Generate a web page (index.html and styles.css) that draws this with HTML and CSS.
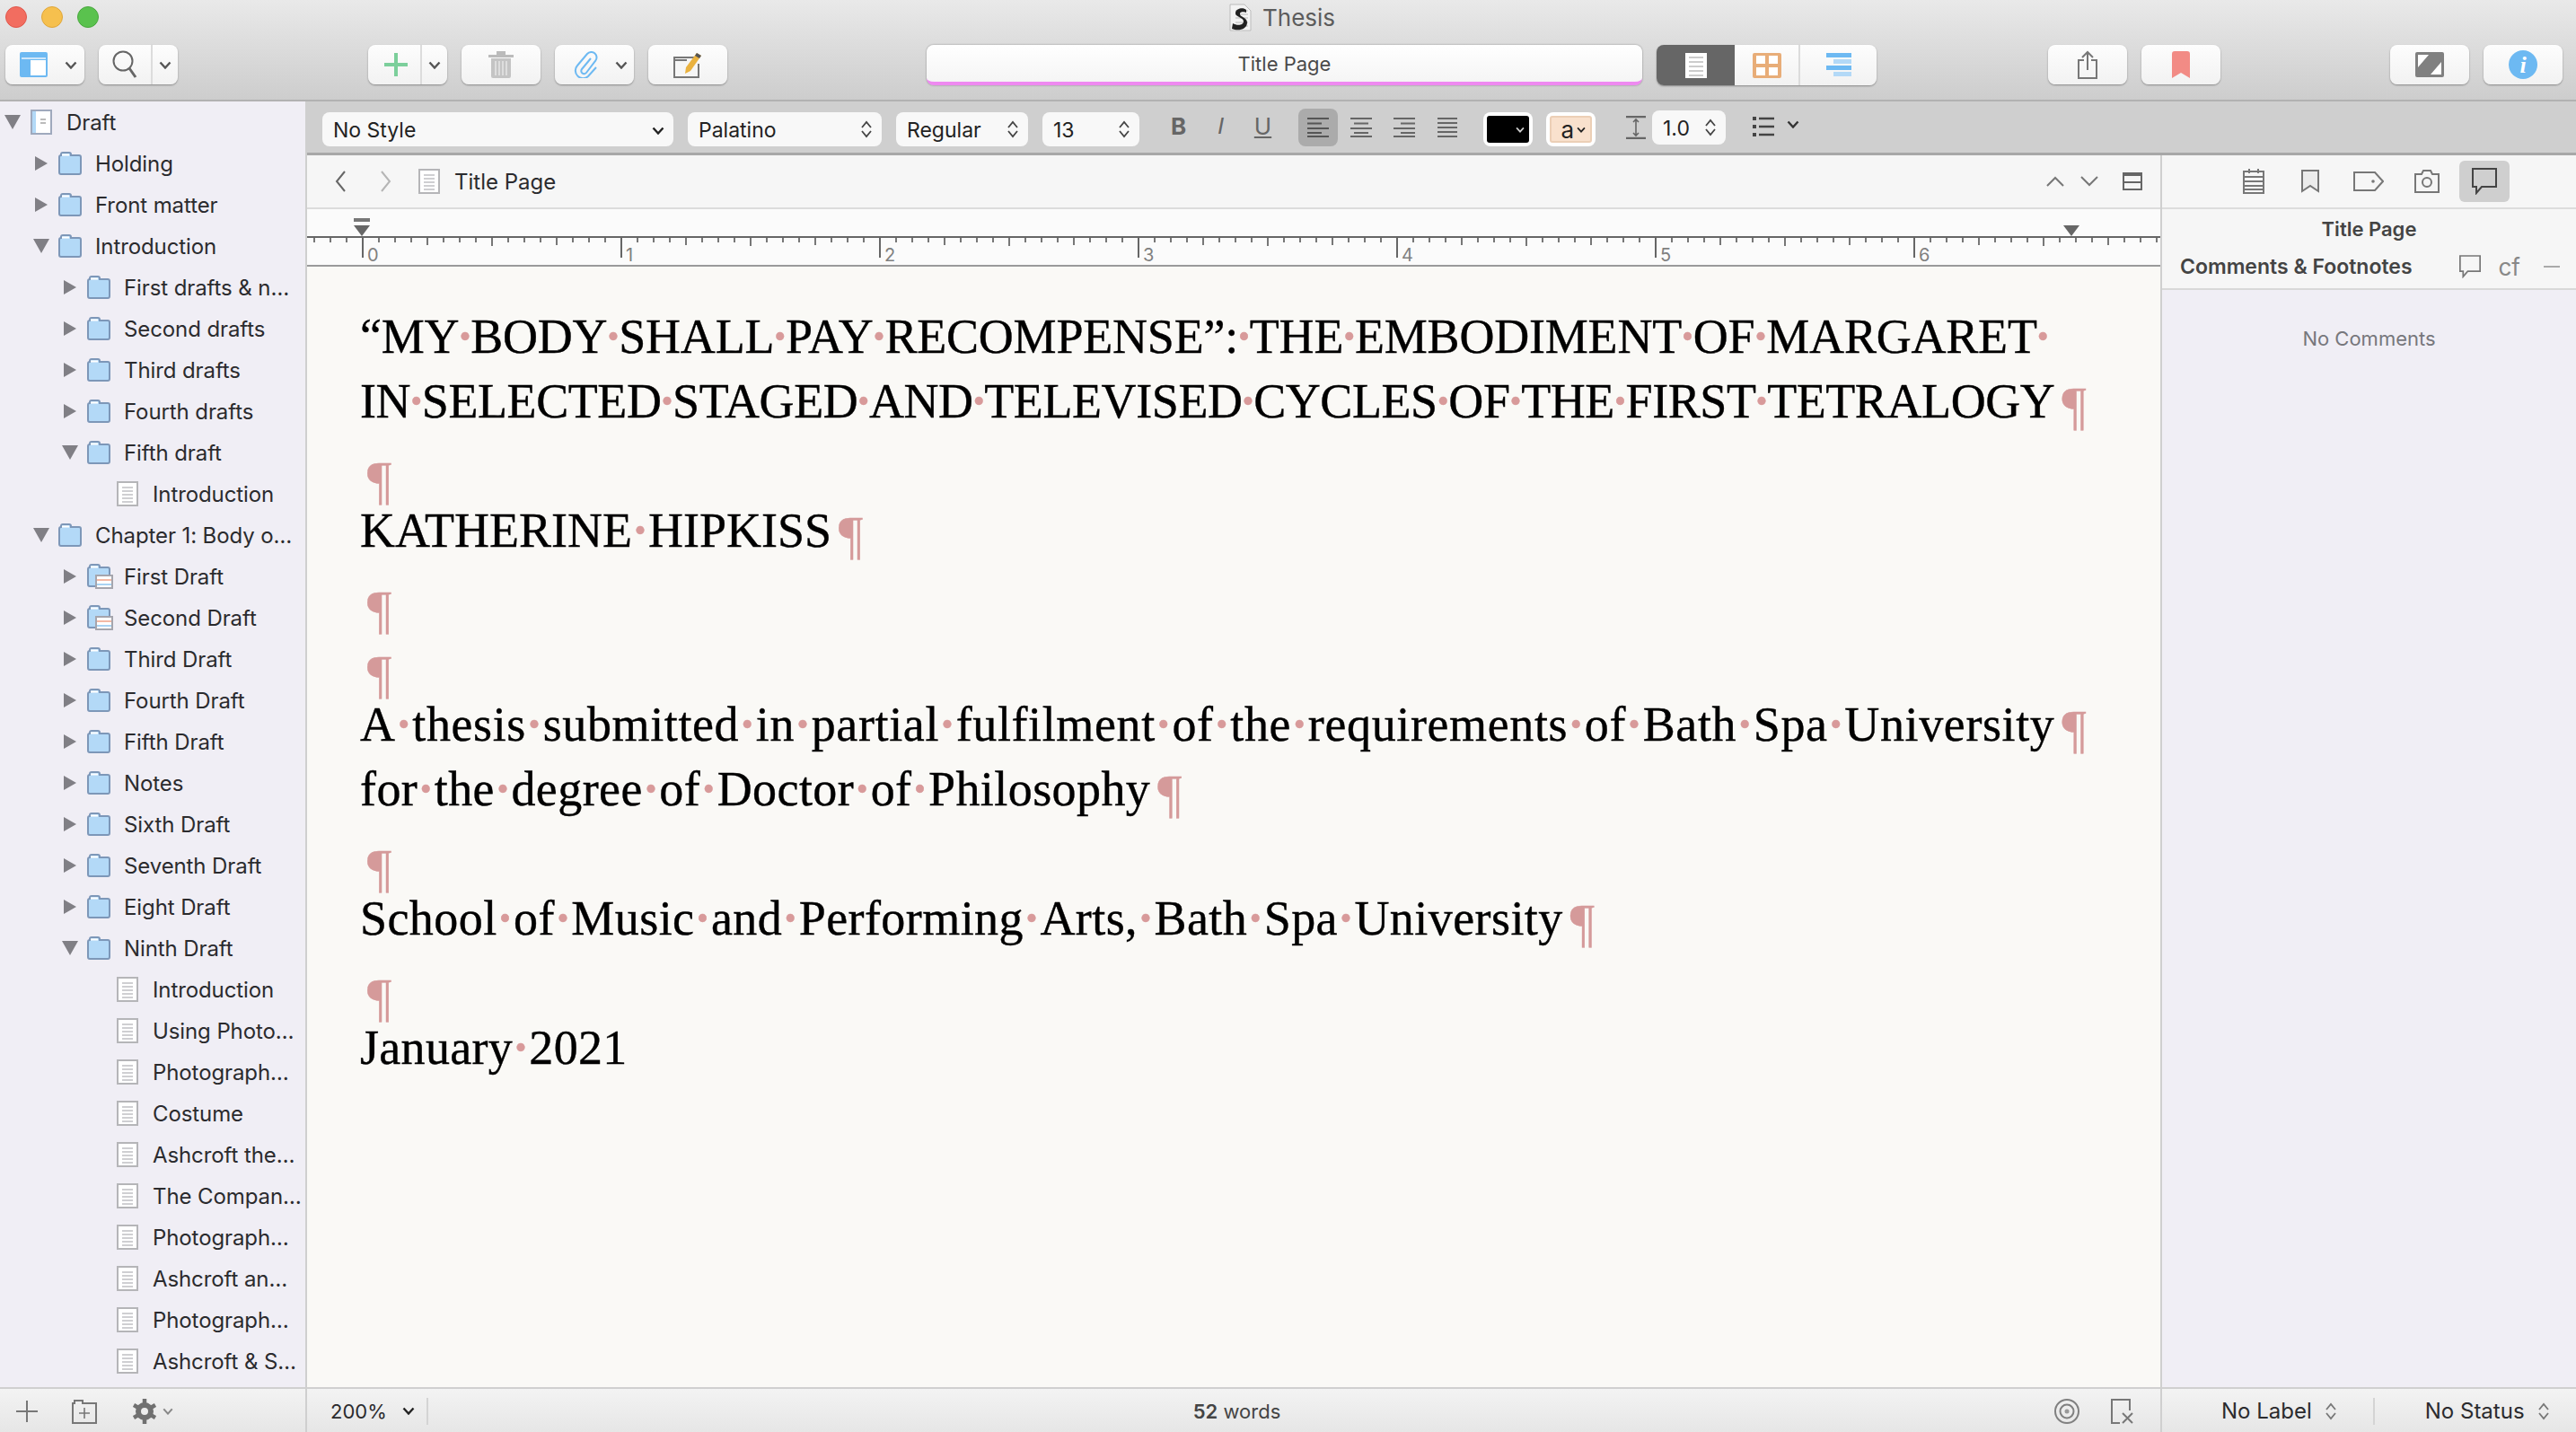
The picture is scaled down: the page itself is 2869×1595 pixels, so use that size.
FILE: index.html
```html
<!DOCTYPE html>
<html lang="en">
<head>
    <meta charset="UTF-8">
    <title>Thesis</title>
    <link rel="stylesheet" href="styles.css">
</head>
<body>
<svg class="sprite">
    <symbol id="folder" viewBox="0 0 28 26">
        <path d="M2 6a2 2 0 0 1 2-2h0V3a2 2 0 0 1 2-2h7a2 2 0 0 1 2 2v1h9a2 2 0 0 1 2 2v17a2 2 0 0 1-2 2H4a2 2 0 0 1-2-2z" fill="#b3d9f7" stroke="#7d97b8" stroke-width="2"/>
        <path d="M5 3.500h8" stroke="#fff" stroke-width="2"/>
    </symbol>
    <symbol id="folder-cork" viewBox="0 0 30 28">
        <path d="M2 6a2 2 0 0 1 2-2h0V3a2 2 0 0 1 2-2h7a2 2 0 0 1 2 2v1h9a2 2 0 0 1 2 2v17a2 2 0 0 1-2 2H4a2 2 0 0 1-2-2z" fill="#b3d9f7" stroke="#7d97b8" stroke-width="2"/>
        <path d="M5 3.500h8" stroke="#fff" stroke-width="2"/>
        <rect x="11" y="13" width="18" height="14" fill="#fff" stroke="#a5a5ad" stroke-width="2"/>
        <rect x="12" y="17" width="16" height="2" fill="#f3b9a5"/>
        <rect x="12" y="22" width="16" height="2" fill="#a9d3f3"/>
    </symbol>
    <symbol id="doc" viewBox="0 0 24 28">
        <rect x="1" y="1" width="22" height="26" fill="#fff" stroke="#b5b5b8" stroke-width="2"/>
        <path d="M6 7h12M6 11h12M6 15h12M6 19h12M6 23h12" stroke="#cfcfd2" stroke-width="2" fill="none"/>
    </symbol>
    <symbol id="chev" viewBox="0 0 14 9">
        <path d="M1.500 1.500L7 7.500l5.500-6" fill="none" stroke="currentColor" stroke-width="2.400"/>
    </symbol>
    <symbol id="updown" viewBox="0 0 14 20">
        <path d="M2 8l5-6 5 6M2 12l5 6 5-6" fill="none" stroke="currentColor" stroke-width="1.800"/>
    </symbol>
    <symbol id="bubble" viewBox="0 0 28 30">
        <path d="M1 1h26v20H11l-6 7v-7H1z" fill="none" stroke="currentColor" stroke-width="2"/>
    </symbol>
</svg>

<div class="window">
    <!-- Title and main toolbar -->
    <header class="toolbar">
        <div class="title-row">
            <div class="lights">
                <span class="light red"></span>
                <span class="light yellow"></span>
                <span class="light green"></span>
            </div>
            <div class="title">
                <svg class="title-icon" width="26" height="31" viewBox="0 0 26 31">
                    <path d="M2 1h16l7 7v22H2z" fill="#f4f4f4" stroke="#bbb"/>
                    <path d="M8 8h14M8 12h14M8 16h14M8 21h14M8 25h14" stroke="#ccc" stroke-width="1.500"/>
                    <path d="M20 7c-3-3-11-2-12 3-1 5 9 5 9 10 0 4-7 5-12 2l-1 6c7 3 17 1 17-7 0-6-9-6-8-10 0-2 5-2 7-1z" fill="#222"/>
                </svg>
                <span>Thesis</span>
            </div>
        </div>
        <div class="tool-row">
            <div class="btn w88 at-view">
                <svg width="31" height="28" viewBox="0 0 31 28"><rect width="31" height="28" rx="2" fill="#6db9f2"/><rect x="2" y="6" width="27" height="2" fill="#cfe7fa"/><rect x="12" y="9" width="17" height="17" fill="#fff"/></svg>
                <svg class="chev" width="14" height="9"><use href="#chev"/></svg>
            </div>
            <div class="btn w88 split at-search">
                <span class="part wide">
                    <svg width="28" height="32" viewBox="0 0 28 32"><circle cx="12" cy="12" r="10.500" fill="none" stroke="#666" stroke-width="2"/><path d="M19 20l7 10" stroke="#666" stroke-width="3"/></svg>
                </span>
                <span class="part">
                    <svg class="chev" width="14" height="9"><use href="#chev"/></svg>
                </span>
            </div>
            <div class="btn w88 split at-add">
                <span class="part wide">
                    <svg class="plus" width="26" height="26" viewBox="0 0 26 26"><path d="M13 0v26M0 13h26" stroke="#7ccf9b" stroke-width="4"/></svg>
                </span>
                <span class="part">
                    <svg class="chev" width="14" height="9"><use href="#chev"/></svg>
                </span>
            </div>
            <div class="btn w88 gap16">
                <svg width="28" height="32" viewBox="0 0 28 32"><path d="M0 5h28v3H0zM9 5V1h10v4z" fill="#bbb"/><path d="M3 9h22v20a2 2 0 0 1-2 2H5a2 2 0 0 1-2-2z" fill="#c4c4c4"/><path d="M8 12v16M12 12v16M16 12v16M20 12v16" stroke="#eee" stroke-width="1.200"/></svg>
            </div>
            <div class="btn w88 gap16 at-clip">
                <svg width="28" height="30" viewBox="0 0 28 30"><path d="M20 8L10 20a3 3 0 0 0 5 4L25 11a6 6 0 0 0-9-8L5 16a8.500 8.500 0 0 0 12 12l9-10" fill="none" stroke="#6db9f2" stroke-width="2"/></svg>
                <svg class="chev" width="14" height="9"><use href="#chev"/></svg>
            </div>
            <div class="btn w88 gap16">
                <svg width="34" height="30" viewBox="0 0 34 30"><path d="M24 7H2v22h27V14" fill="#f6f6f6" stroke="#777" stroke-width="2"/><path d="M2 10h14" stroke="#777" stroke-width="2"/><path d="M27 2l5 3-12 17-6 3 1-7z" fill="#eab23f"/><path d="M27 2l5 3-2 3-5-3z" fill="#555"/></svg>
            </div>
            <div class="binder-title">Title Page</div>
            <div class="segs">
                <span class="seg dark">
                    <svg width="24" height="28" viewBox="0 0 24 28"><rect width="24" height="28" fill="#fff"/><path d="M4 5h16M4 10h16M4 15h16M4 20h16M4 25h16" stroke="#ccc" stroke-width="2"/></svg>
                </span>
                <span class="seg cork">
                    <svg width="32" height="28" viewBox="0 0 32 28"><rect width="32" height="28" rx="2" fill="#e8ad78"/><rect x="4" y="3" width="10" height="9" fill="#fff"/><rect x="18" y="3" width="10" height="9" fill="#fff"/><rect x="4" y="16" width="10" height="9" fill="#fff"/><rect x="18" y="16" width="10" height="9" fill="#fff"/></svg>
                </span>
                <span class="seg outline">
                    <svg width="28" height="28" viewBox="0 0 28 28"><path d="M0 2.500h28M0 16.500h28" stroke="#6db9f2" stroke-width="5"/><path d="M8 9.500h20M8 23.500h20" stroke="#b3d9f7" stroke-width="5"/></svg>
                </span>
            </div>
            <div class="btn w88 at-share">
                <svg width="22" height="32" viewBox="0 0 22 32"><path d="M7 11H1v20h20V11h-6" fill="none" stroke="#777" stroke-width="2"/><path d="M11 22V2M5 8l6-6 6 6" fill="none" stroke="#777" stroke-width="2"/></svg>
            </div>
            <div class="btn w88 gap16">
                <svg width="20" height="30" viewBox="0 0 20 30"><path d="M0 3a3 3 0 0 1 3-3h14a3 3 0 0 1 3 3v27l-10-6-10 6z" fill="#f28b85"/></svg>
            </div>
            <div class="btn w88 at-quick">
                <svg width="32" height="28" viewBox="0 0 32 28"><rect width="32" height="28" rx="2" fill="#808080"/><path d="M3 3h12L3 17zM29 25H17l12-14z" fill="#fff"/></svg>
            </div>
            <div class="btn w88 gap16">
                <svg width="32" height="32" viewBox="0 0 32 32"><circle cx="16" cy="16" r="16" fill="#6db9f2"/><text class="info-i" x="16" y="25" text-anchor="middle">i</text></svg>
            </div>
        </div>
    </header>

    <div class="main">
        <!-- Binder -->
        <aside class="binder">
            <div class="binder-list">
                <div class="row l0"><span class="tri down"></span><span class="slot"><svg class="ic-doc" viewBox="0 0 24 28"><rect x="1" y="1" width="22" height="26" fill="#fff" stroke="#9fa9bd" stroke-width="2"/><rect x="2" y="2" width="4" height="24" fill="#b3d9f7"/><path d="M11 11h6M11 15h6" stroke="#bbb" stroke-width="2"/></svg></span><span class="name">Draft</span></div>
                <div class="row l1"><span class="tri right"></span><span class="slot"><svg class="ic-folder"><use href="#folder"/></svg></span><span class="name">Holding</span></div>
                <div class="row l1"><span class="tri right"></span><span class="slot"><svg class="ic-folder"><use href="#folder"/></svg></span><span class="name">Front matter</span></div>
                <div class="row l1"><span class="tri down"></span><span class="slot"><svg class="ic-folder"><use href="#folder"/></svg></span><span class="name">Introduction</span></div>
                <div class="row l2"><span class="tri right"></span><span class="slot"><svg class="ic-folder"><use href="#folder"/></svg></span><span class="name">First drafts &amp; n…</span></div>
                <div class="row l2"><span class="tri right"></span><span class="slot"><svg class="ic-folder"><use href="#folder"/></svg></span><span class="name">Second drafts</span></div>
                <div class="row l2"><span class="tri right"></span><span class="slot"><svg class="ic-folder"><use href="#folder"/></svg></span><span class="name">Third drafts</span></div>
                <div class="row l2"><span class="tri right"></span><span class="slot"><svg class="ic-folder"><use href="#folder"/></svg></span><span class="name">Fourth drafts</span></div>
                <div class="row l2"><span class="tri down"></span><span class="slot"><svg class="ic-folder"><use href="#folder"/></svg></span><span class="name">Fifth draft</span></div>
                <div class="row l3"><span class="tri"></span><span class="slot"><svg class="ic-doc"><use href="#doc"/></svg></span><span class="name">Introduction</span></div>
                <div class="row l1"><span class="tri down"></span><span class="slot"><svg class="ic-folder"><use href="#folder"/></svg></span><span class="name">Chapter 1: Body o…</span></div>
                <div class="row l2"><span class="tri right"></span><span class="slot"><svg class="ic-cork"><use href="#folder-cork"/></svg></span><span class="name">First Draft</span></div>
                <div class="row l2"><span class="tri right"></span><span class="slot"><svg class="ic-cork"><use href="#folder-cork"/></svg></span><span class="name">Second Draft</span></div>
                <div class="row l2"><span class="tri right"></span><span class="slot"><svg class="ic-folder"><use href="#folder"/></svg></span><span class="name">Third Draft</span></div>
                <div class="row l2"><span class="tri right"></span><span class="slot"><svg class="ic-folder"><use href="#folder"/></svg></span><span class="name">Fourth Draft</span></div>
                <div class="row l2"><span class="tri right"></span><span class="slot"><svg class="ic-folder"><use href="#folder"/></svg></span><span class="name">Fifth Draft</span></div>
                <div class="row l2"><span class="tri right"></span><span class="slot"><svg class="ic-folder"><use href="#folder"/></svg></span><span class="name">Notes</span></div>
                <div class="row l2"><span class="tri right"></span><span class="slot"><svg class="ic-folder"><use href="#folder"/></svg></span><span class="name">Sixth Draft</span></div>
                <div class="row l2"><span class="tri right"></span><span class="slot"><svg class="ic-folder"><use href="#folder"/></svg></span><span class="name">Seventh Draft</span></div>
                <div class="row l2"><span class="tri right"></span><span class="slot"><svg class="ic-folder"><use href="#folder"/></svg></span><span class="name">Eight Draft</span></div>
                <div class="row l2"><span class="tri down"></span><span class="slot"><svg class="ic-folder"><use href="#folder"/></svg></span><span class="name">Ninth Draft</span></div>
                <div class="row l3"><span class="tri"></span><span class="slot"><svg class="ic-doc"><use href="#doc"/></svg></span><span class="name">Introduction</span></div>
                <div class="row l3"><span class="tri"></span><span class="slot"><svg class="ic-doc"><use href="#doc"/></svg></span><span class="name">Using Photo…</span></div>
                <div class="row l3"><span class="tri"></span><span class="slot"><svg class="ic-doc"><use href="#doc"/></svg></span><span class="name">Photograph…</span></div>
                <div class="row l3"><span class="tri"></span><span class="slot"><svg class="ic-doc"><use href="#doc"/></svg></span><span class="name">Costume</span></div>
                <div class="row l3"><span class="tri"></span><span class="slot"><svg class="ic-doc"><use href="#doc"/></svg></span><span class="name">Ashcroft the…</span></div>
                <div class="row l3"><span class="tri"></span><span class="slot"><svg class="ic-doc"><use href="#doc"/></svg></span><span class="name">The Compan…</span></div>
                <div class="row l3"><span class="tri"></span><span class="slot"><svg class="ic-doc"><use href="#doc"/></svg></span><span class="name">Photograph…</span></div>
                <div class="row l3"><span class="tri"></span><span class="slot"><svg class="ic-doc"><use href="#doc"/></svg></span><span class="name">Ashcroft an…</span></div>
                <div class="row l3"><span class="tri"></span><span class="slot"><svg class="ic-doc"><use href="#doc"/></svg></span><span class="name">Photograph…</span></div>
                <div class="row l3"><span class="tri"></span><span class="slot"><svg class="ic-doc"><use href="#doc"/></svg></span><span class="name">Ashcroft &amp; S…</span></div>
            </div>
            <div class="footer binder-foot">
                <svg width="24" height="24" viewBox="0 0 24 24"><path d="M12 0v24M0 12h24" stroke="#777" stroke-width="2"/></svg>
                <svg class="foot-folder" width="28" height="28" viewBox="0 0 28 28"><path d="M1 5h2V2h9v3h15v22H1z" fill="none" stroke="#777" stroke-width="2"/><path d="M14 10v12M8 16h12" stroke="#777" stroke-width="1.600"/></svg>
                <svg class="foot-gear" width="26" height="28" viewBox="0 0 26 28"><circle cx="13" cy="14" r="7" fill="none" stroke="#707070" stroke-width="6"/><path d="M13 0v28M1 7l24 14M25 7L1 21" stroke="#707070" stroke-width="4.500" stroke-dasharray="5 18"/></svg>
                <svg class="foot-chev" width="12" height="8"><use href="#chev"/></svg>
            </div>
        </aside>

        <div class="content">
            <!-- Format bar -->
            <div class="formatbar">
                <div class="select s-style"><span>No Style</span><svg class="dark-chev" width="14" height="9"><use href="#chev"/></svg></div>
                <div class="select s-font"><span>Palatino</span><svg class="ud" width="14" height="20"><use href="#updown"/></svg></div>
                <div class="select s-weight"><span>Regular</span><svg class="ud" width="14" height="20"><use href="#updown"/></svg></div>
                <div class="select s-size"><span>13</span><svg class="ud" width="14" height="20"><use href="#updown"/></svg></div>
                <span class="fmt first bold">B</span>
                <span class="fmt ital">I</span>
                <span class="fmt under">U</span>
                <span class="align active">
                    <svg width="24" height="22" viewBox="0 0 24 22"><path d="M0 1h24M0 6.500h16M0 12h24M0 17h16M0 21h24" stroke="#555" stroke-width="2"/></svg>
                </span>
                <span class="align">
                    <svg width="24" height="22" viewBox="0 0 24 22"><path d="M0 1h24M4 6.500h16M0 12h24M4 17h16M0 21h24" stroke="#666" stroke-width="2"/></svg>
                </span>
                <span class="align">
                    <svg width="24" height="22" viewBox="0 0 24 22"><path d="M0 1h24M8 6.500h16M0 12h24M8 17h16M0 21h24" stroke="#666" stroke-width="2"/></svg>
                </span>
                <span class="align">
                    <svg width="22" height="22" viewBox="0 0 22 22"><path d="M0 1h22M0 6h22M0 11h22M0 16h22M0 21h22" stroke="#666" stroke-width="2"/></svg>
                </span>
                <div class="well w-color"><span class="swatch"><svg class="well-chev" width="10" height="7"><use href="#chev"/></svg></span></div>
                <div class="well w-high"><span class="swatch peach">a<svg class="well-chev" width="10" height="7"><use href="#chev"/></svg></span></div>
                <svg class="spacing-icon" width="22" height="26" viewBox="0 0 22 26"><path d="M0 1h22M0 25h22" stroke="#666" stroke-width="2.400"/><path d="M11 4v18M8 7l3-3 3 3M8 19l3 3 3-3" fill="none" stroke="#666" stroke-width="1.600"/></svg>
                <div class="select s-spacing"><span>1.0</span><svg class="ud" width="14" height="20"><use href="#updown"/></svg></div>
                <svg class="list-icon" width="24" height="22" viewBox="0 0 24 22"><path d="M7 2h17M7 11h17M7 20h17" stroke="#444" stroke-width="2.400"/><path d="M0 2h4M0 11h4M0 20h4" stroke="#444" stroke-width="4" stroke-dasharray="4 40"/></svg>
                <svg class="list-chev" width="14" height="9"><use href="#chev"/></svg>
            </div>

            <div class="panes">
                <section class="editor-pane">
                    <div class="edit-head">
                        <svg class="nav" width="14" height="26" viewBox="0 0 14 26"><path d="M12 2L3 13l9 11" fill="none" stroke="#666" stroke-width="2"/></svg>
                        <svg class="nav next" width="14" height="26" viewBox="0 0 14 26"><path d="M2 2l9 11-9 11" fill="none" stroke="#b5b5b5" stroke-width="2"/></svg>
                        <svg class="head-doc" width="24" height="28"><use href="#doc"/></svg>
                        <span class="head-title">Title Page</span>
                        <svg class="head-up" width="20" height="12" viewBox="0 0 20 12"><path d="M1 11l9-9 9 9" fill="none" stroke="#777" stroke-width="2"/></svg>
                        <svg class="head-down" width="20" height="12" viewBox="0 0 20 12"><path d="M1 1l9 9 9-9" fill="none" stroke="#777" stroke-width="2"/></svg>
                        <svg class="head-split" width="22" height="20" viewBox="0 0 22 20"><rect x="1" y="1" width="20" height="18" fill="none" stroke="#666" stroke-width="2"/><rect x="1" y="1" width="20" height="3" fill="#666"/><path d="M1 11h20" stroke="#666" stroke-width="2"/></svg>
                    </div>
                    <div class="ruler">
                        <span class="indent-bar"></span>
                        <span class="marker m-left"></span>
                        <span class="marker m-right"></span>
                        <div class="ruler-track">
                            <div class="inch">0</div>
                            <div class="inch">1</div>
                            <div class="inch">2</div>
                            <div class="inch">3</div>
                            <div class="inch">4</div>
                            <div class="inch">5</div>
                            <div class="inch">6</div>
                        </div>
                    </div>
                    <div class="editor">
                        <div class="line t1">“MY<span class="sp">·</span>BODY<span class="sp">·</span>SHALL<span class="sp">·</span>PAY<span class="sp">·</span>RECOMPENSE”:<span class="sp">·</span>THE<span class="sp">·</span>EMBODIMENT<span class="sp">·</span>OF<span class="sp">·</span>MARGARET<span class="sp">·</span></div>
                        <div class="line t2">IN<span class="sp">·</span>SELECTED<span class="sp">·</span>STAGED<span class="sp">·</span>AND<span class="sp">·</span>TELEVISED<span class="sp">·</span>CYCLES<span class="sp">·</span>OF<span class="sp">·</span>THE<span class="sp">·</span>FIRST<span class="sp">·</span>TETRALOGY<span class="pil">¶</span></div>
                        <div class="line empty"><span class="pil">¶</span></div>
                        <div class="line t3">KATHERINE<span class="sp">·</span>HIPKISS<span class="pil">¶</span></div>
                        <div class="line empty"><span class="pil">¶</span></div>
                        <div class="line empty"><span class="pil">¶</span></div>
                        <div class="line t4">A<span class="sp">·</span>thesis<span class="sp">·</span>submitted<span class="sp">·</span>in<span class="sp">·</span>partial<span class="sp">·</span>fulfilment<span class="sp">·</span>of<span class="sp">·</span>the<span class="sp">·</span>requirements<span class="sp">·</span>of<span class="sp">·</span>Bath<span class="sp">·</span>Spa<span class="sp">·</span>University<span class="pil">¶</span></div>
                        <div class="line t5">for<span class="sp">·</span>the<span class="sp">·</span>degree<span class="sp">·</span>of<span class="sp">·</span>Doctor<span class="sp">·</span>of<span class="sp">·</span>Philosophy<span class="pil">¶</span></div>
                        <div class="line empty"><span class="pil">¶</span></div>
                        <div class="line t6">School<span class="sp">·</span>of<span class="sp">·</span>Music<span class="sp">·</span>and<span class="sp">·</span>Performing<span class="sp">·</span>Arts,<span class="sp">·</span>Bath<span class="sp">·</span>Spa<span class="sp">·</span>University<span class="pil">¶</span></div>
                        <div class="line empty"><span class="pil">¶</span></div>
                        <div class="line t7">January<span class="sp">·</span>2021</div>
                    </div>
                    <div class="footer edit-foot">
                        <span class="zoom">200%</span>
                        <svg class="zoom-chev" width="14" height="9"><use href="#chev"/></svg>
                        <span class="vsep"></span>
                        <span class="words"><b>52</b> words</span>
                        <svg class="target" width="28" height="28" viewBox="0 0 28 28"><circle cx="14" cy="14" r="13" fill="none" stroke="#808080" stroke-width="2"/><circle cx="14" cy="14" r="7.500" fill="none" stroke="#808080" stroke-width="2"/><circle cx="14" cy="14" r="2.500" fill="#999"/></svg>
                        <svg class="scrivx" width="26" height="28" viewBox="0 0 26 28"><path d="M10 27H1V1h20v12" fill="none" stroke="#777" stroke-width="2"/><path d="M13 16l11 11M24 16L13 27" stroke="#777" stroke-width="2"/></svg>
                    </div>
                </section>

                <!-- Inspector -->
                <aside class="inspector">
                    <div class="ins-tabs">
                        <svg class="tab-ic" width="24" height="28" viewBox="0 0 24 28"><rect x="1" y="3" width="22" height="24" fill="none" stroke="#777" stroke-width="2"/><path d="M1 9h22M1 14h22M1 19h22M1 23h22" stroke="#777" stroke-width="2"/><path d="M7 0v5M17 0v5" stroke="#777" stroke-width="2"/></svg>
                        <svg class="tab-ic t-mark" width="20" height="26" viewBox="0 0 20 26"><path d="M1 1h18v23l-9-6-9 6z" fill="#ececec" stroke="#777" stroke-width="2"/></svg>
                        <svg class="tab-ic t-tag" width="34" height="22" viewBox="0 0 34 22"><path d="M1 1h23l9 10-9 10H1z" fill="none" stroke="#777" stroke-width="2"/><circle cx="22" cy="11" r="1.800" fill="#777"/></svg>
                        <svg class="tab-ic t-cam" width="28" height="26" viewBox="0 0 28 26"><path d="M1 5h7l2-4h8l2 4h7v20H1z" fill="none" stroke="#777" stroke-width="2"/><circle cx="14" cy="14" r="5" fill="none" stroke="#777" stroke-width="2"/></svg>
                        <span class="tab-active"><svg class="tab-bubble" width="28" height="30"><use href="#bubble"/></svg></span>
                    </div>
                    <div class="ins-head">
                        <div class="ins-title">Title Page</div>
                        <div class="ins-sub">
                            <span class="ins-label">Comments &amp; Footnotes</span>
                            <svg class="sub-bubble" width="24" height="26"><use href="#bubble"/></svg>
                            <span class="cf">cf</span>
                            <span class="minus"></span>
                        </div>
                    </div>
                    <div class="ins-body">No Comments</div>
                    <div class="footer ins-foot">
                        <span class="foot-sel first-sel">No Label</span>
                        <svg class="foot-ud" width="14" height="20"><use href="#updown"/></svg>
                        <span class="vsep"></span>
                        <span class="foot-sel">No Status</span>
                        <svg class="foot-ud" width="14" height="20"><use href="#updown"/></svg>
                    </div>
                </aside>
            </div>
        </div>
    </div>
</div>
</body>
</html>
```
FILE: styles.css
```css
* {
    box-sizing: border-box;
}

body {
    margin: 0;
    height: 100vh;
    overflow: hidden;
    font-family: Inter, "Noto Sans", sans-serif;
    font-size: 24px;
    color: #2b2b2e;
}

.sprite {
    display: none;
}

.window {
    display: flex;
    flex-direction: column;
    height: 100%;
}

/* Title + toolbar */
.toolbar {
    height: 113px;
    flex: none;
    background: linear-gradient(#e9e9e9, #cdcdcd);
    border-bottom: 2px solid #b2b2b2;
}

.title-row {
    height: 50px;
    display: flex;
    align-items: flex-start;
}

.lights {
    display: flex;
    gap: 16px;
    margin: 7px 0 0 6px;
}

.light {
    width: 24px;
    height: 24px;
    border-radius: 50%;
}

.red { background: #f26d60; border: 1px solid #e0574c; }
.yellow { background: #f6c04e; border: 1px solid #dfa63a; }
.green { background: #5ac24e; border: 1px solid #4aa83f; }

.title {
    display: flex;
    align-items: center;
    gap: 12px;
    margin: 4px 0 0 1258px;
    font-size: 26px;
    color: #5c5c5c;
}

.tool-row {
    display: flex;
    align-items: flex-start;
    padding-left: 6px;
}

.btn {
    height: 44px;
    display: flex;
    align-items: center;
    justify-content: center;
    gap: 16px;
    background: linear-gradient(#fdfdfd, #f2f2f2);
    border-radius: 8px;
    box-shadow: 0 1px 2px rgba(0, 0, 0, 0.35);
    color: #555;
}

.w88 {
    width: 88px;
}

.gap16 {
    margin-left: 16px;
}

.at-view {
    justify-content: flex-start;
    padding-left: 16px;
    gap: 19px;
}

.at-clip {
    justify-content: flex-start;
    padding-left: 20px;
    gap: 19px;
}

.at-search { margin-left: 16px; }
.at-add { margin-left: 212px; }
.at-share { margin-left: 191px; }
.at-quick { margin-left: 189px; }

.split {
    gap: 0;
    align-items: stretch;
}

.part {
    width: 30px;
    display: flex;
    align-items: center;
    justify-content: center;
    border-left: 2px solid #dcdcdc;
}

.part.wide {
    flex: 1;
    border-left: none;
}

.plus {
    margin-left: 4px;
}

.binder-title {
    width: 797px;
    height: 45px;
    margin-left: 222px;
    display: flex;
    align-items: center;
    justify-content: center;
    font-size: 22px;
    color: #4a4a4a;
    background: linear-gradient(#fff, #f5f5f5);
    border-radius: 8px;
    border-bottom: 4px solid #ee8af0;
    box-shadow: 0 0 2px rgba(0, 0, 0, 0.45);
}

.segs {
    display: flex;
    height: 45px;
    margin-left: 16px;
    border-radius: 8px;
    overflow: hidden;
    box-shadow: 0 1px 2px rgba(0, 0, 0, 0.35);
}

.seg {
    display: flex;
    align-items: center;
    justify-content: center;
    background: linear-gradient(#fdfdfd, #f2f2f2);
}

.seg.dark {
    width: 87px;
    background: #666;
}

.seg.cork {
    width: 73px;
    border-right: 2px solid #dcdcdc;
}

.seg.outline {
    width: 85px;
}

.info-i {
    font-family: "Liberation Serif", serif;
    font-style: italic;
    font-weight: bold;
    font-size: 26px;
    fill: #fff;
}

/* Main area */
.main {
    flex: 1;
    min-height: 0;
    display: flex;
}

.binder {
    width: 342px;
    flex: none;
    display: flex;
    flex-direction: column;
    background: #f0eef5;
    border-right: 2px solid #cfcfcf;
}

.binder-list {
    flex: 1;
    min-height: 0;
    overflow: hidden;
}

.row {
    height: 46px;
    display: flex;
    align-items: center;
    white-space: nowrap;
    letter-spacing: -0.1px;
}

.l1 { padding-left: 32px; }
.l2 { padding-left: 64px; }
.l3 { padding-left: 96px; }

.tri {
    width: 28px;
    margin-right: 4px;
    flex: none;
    display: flex;
    justify-content: center;
}

.tri.right::before {
    content: "";
    border-left: 14px solid #807f85;
    border-top: 8.5px solid transparent;
    border-bottom: 8.5px solid transparent;
}

.tri.down::before {
    content: "";
    border-top: 16px solid #807f85;
    border-left: 9px solid transparent;
    border-right: 9px solid transparent;
}

.slot {
    width: 28px;
    flex: none;
    display: flex;
    justify-content: center;
}

.ic-folder {
    width: 28px;
    height: 26px;
}

.ic-cork {
    width: 30px;
    height: 28px;
    flex: none;
    margin: 0 -2px 0 0;
}

.ic-doc {
    width: 24px;
    height: 28px;
}

.name {
    margin-left: 14px;
}

.footer {
    height: 50px;
    flex: none;
    display: flex;
    align-items: center;
    padding-top: 1px;
    background: linear-gradient(#f3f3f3, #e6e6e6);
    border-top: 2px solid #d0d0d0;
    font-size: 24px;
}

.binder-foot {
    padding-left: 18px;
}

.foot-folder { margin-left: 38px; }
.foot-gear { margin-left: 40px; }
.foot-chev { margin-left: 7px; color: #888; }

.content {
    flex: 1;
    min-width: 0;
    display: flex;
    flex-direction: column;
}

/* Format bar */
.formatbar {
    height: 60px;
    flex: none;
    display: flex;
    align-items: flex-start;
    padding: 12px 0 0 17px;
    background: #cfcfcf;
    border-bottom: 3px solid #a8a8a8;
    font-size: 23px;
    color: #222;
}

.select {
    height: 38px;
    display: flex;
    align-items: center;
    justify-content: space-between;
    padding: 2px 10px 0 12px;
    margin-right: 16px;
    background: #f8f8f8;
    border-radius: 8px;
}

.dark-chev { color: #222; }
.ud { color: #444; margin: -2px 0 0; }

.s-style { width: 391px; }
.s-font { width: 216px; }
.s-weight { width: 147px; }
.s-size { width: 108px; margin-right: 0; }

.fmt {
    width: 47px;
    height: 38px;
    display: flex;
    align-items: center;
    justify-content: center;
    margin-top: -4px;
    font-size: 26px;
    color: #666;
}

.fmt.first { margin-left: 20px; }
.bold { font-weight: bold; }
.ital { font-style: italic; font-family: "Liberation Sans", sans-serif; }
.under { text-decoration: underline; }

.align {
    width: 44px;
    height: 42px;
    margin: -4px 4px 0 0;
    display: flex;
    align-items: center;
    justify-content: center;
    border-radius: 8px;
}

.fmt + .align {
    margin-left: 16px;
}

.align.active {
    background: #ababab;
}

.well {
    width: 55px;
    height: 38px;
    display: flex;
    align-items: center;
    justify-content: center;
    background: #fff;
    border-radius: 8px;
}

.w-color { margin-left: 14px; }
.w-high { margin-left: 15px; }

.swatch {
    width: 47px;
    height: 30px;
    display: flex;
    align-items: center;
    justify-content: flex-end;
    gap: 3px;
    padding-right: 5px;
    background: #000;
    border-radius: 3px;
    color: #ccc;
}

.swatch.peach {
    background: #f9e1cd;
    border: 2px solid #eccfb6;
    color: #222;
    font-size: 26px;
}

.spacing-icon {
    margin: 4px 0 0 34px;
}

.s-spacing {
    width: 82px;
    margin: -2px 0 0 7px;
}

.list-icon {
    margin: 5px 0 0 30px;
}

.list-chev {
    margin: 9px 0 0 14px;
    color: #333;
}

/* Editor */
.panes {
    flex: 1;
    min-height: 0;
    display: flex;
}

.editor-pane {
    flex: 1;
    min-width: 0;
    display: flex;
    flex-direction: column;
}

.edit-head {
    height: 60px;
    flex: none;
    display: flex;
    align-items: center;
    background: #f6f6f6;
    border-bottom: 2px solid #dcdcdc;
    padding-left: 30px;
}

.nav.next { margin-left: 37px; }
.head-doc { margin-left: 29px; }
.head-title { margin-left: 16px; }
.head-up { margin-left: auto; }
.head-down { margin-left: 18px; }
.head-split { margin: 0 20px 0 27px; }

.ruler {
    height: 64px;
    flex: none;
    position: relative;
    padding-top: 30px;
    background: #fbfbfb;
    border-bottom: 2px solid #9a9a9a;
    overflow: hidden;
}

.ruler-track {
    display: flex;
    height: 32px;
    padding-left: 61px;
    border-top: 2px solid #666;
    background:
        linear-gradient(90deg, #777 2px, transparent 2px) 61px 0 / 144px 9px repeat-x,
        linear-gradient(90deg, #777 2px, transparent 2px) 61px 0 / 72px 8px repeat-x,
        linear-gradient(90deg, #777 2px, transparent 2px) 7px 0 / 18px 5px repeat-x;
}

.inch {
    width: 288px;
    flex: none;
    height: 22px;
    padding: 8px 0 0 4px;
    border-left: 2px solid #666;
    font-size: 20px;
    line-height: 22px;
    color: #808080;
}

.indent-bar {
    position: absolute;
    left: 52px;
    top: 10px;
    width: 18px;
    height: 4px;
    background: #777;
}

.marker {
    position: absolute;
    top: 18px;
    border-top: 12px solid #666;
    border-left: 9px solid transparent;
    border-right: 9px solid transparent;
}

.m-left { left: 52px; }
.m-right { left: 1956px; }

.editor {
    flex: 1;
    min-height: 0;
    padding: 42px 0 0 59px;
    background: #faf9f6;
    font-family: "Liberation Serif", "Times New Roman", serif;
    font-size: 54px;
    color: #000;
    overflow: hidden;
}

.line {
    height: 72px;
    line-height: 72px;
    white-space: nowrap;
    -webkit-text-stroke-width: 0.4px;
}

.t1 { letter-spacing: -0.2px; }
.t2 { letter-spacing: -0.41px; }
.t4 { letter-spacing: 0.62px; }
.t5 { letter-spacing: 0.43px; }
.t6 { letter-spacing: 0.43px; }
.t7 { letter-spacing: 0.3px; }

.sp {
    color: #d89a9a;
    font-weight: bold;
}

/* caps lines sit tighter around the space dots */
.t1 .sp,
.t2 .sp {
    margin: 0 -2.5px;
}

.pil {
    display: inline-block;
    margin-left: 8px;
    color: #d59a9a;
    font-size: 60px;
    line-height: 0;
    vertical-align: -7px;
}

.empty .pil {
    vertical-align: -18px;
}

.edit-foot {
    padding-left: 26px;
}

.zoom { font-size: 22px; }
.zoom-chev { margin-left: 17px; color: #222; }
.vsep { width: 2px; height: 30px; background: #d4d4d4; }
.edit-foot .vsep { margin-left: 13px; }

.words {
    margin-left: 852px;
    font-size: 22px;
    color: #444;
}

.words b { font-weight: 600; }

.target { margin-left: auto; }
.scrivx { margin: 0 29px 0 35px; }

/* Inspector */
.inspector {
    width: 463px;
    flex: none;
    display: flex;
    flex-direction: column;
    border-left: 2px solid #cfcfcf;
}

.ins-tabs {
    height: 60px;
    flex: none;
    display: flex;
    align-items: center;
    padding-left: 90px;
    background: #f6f6f6;
    border-bottom: 2px solid #dcdcdc;
}

.tab-ic { flex: none; }
.t-mark { margin-left: 41px; }
.t-tag { margin-left: 38px; }
.t-cam { margin-left: 34px; }

.tab-active {
    width: 56px;
    height: 46px;
    margin-left: 22px;
    display: flex;
    align-items: center;
    justify-content: center;
    background: #cfcfcf;
    border-radius: 6px;
    color: #444;
}

.ins-head {
    height: 90px;
    flex: none;
    padding-top: 8px;
    background: #f6f6f6;
    border-bottom: 2px solid #d8d8d8;
}

.ins-title {
    text-align: center;
    font-size: 22px;
    font-weight: 600;
    line-height: 28px;
    color: #444;
}

.ins-sub {
    display: flex;
    align-items: center;
    height: 28px;
    margin-top: 14px;
    padding-left: 20px;
    color: #444;
}

.ins-label {
    font-size: 23px;
    font-weight: 600;
    white-space: nowrap;
}

.sub-bubble {
    margin-left: auto;
    color: #777;
}

.cf {
    margin-left: 20px;
    font-size: 26px;
    color: #888;
}

.minus {
    width: 18px;
    height: 2px;
    margin: 0 18px 0 26px;
    background: #aaa;
}

.ins-body {
    flex: 1;
    padding-top: 41px;
    text-align: center;
    font-size: 22px;
    color: #77777c;
    background: #f0eef5;
}

.ins-foot {
    padding-left: 66px;
}

.foot-sel {
    white-space: nowrap;
}

.foot-ud {
    margin-left: 14px;
    color: #777;
}

.ins-foot .vsep {
    margin: 0 56px 0 40px;
}
```
